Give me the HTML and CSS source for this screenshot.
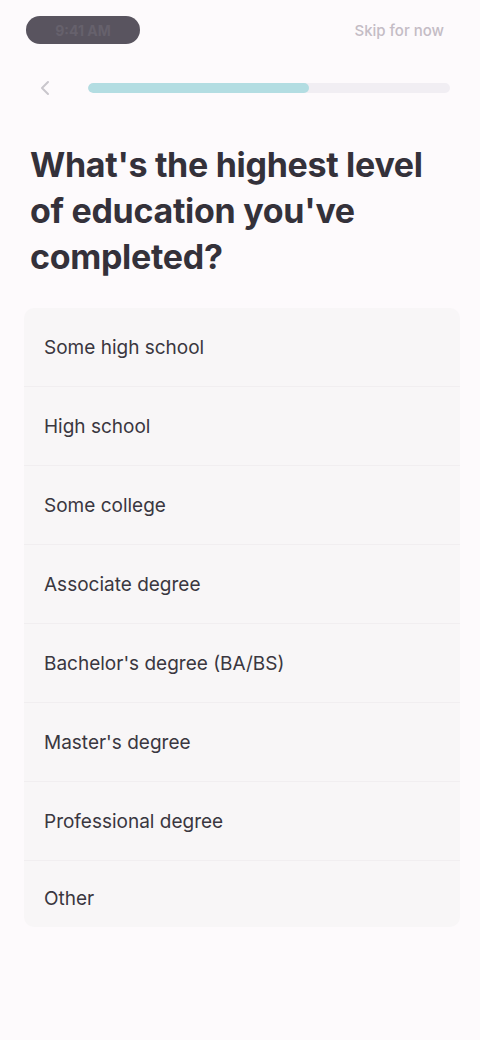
FILE: index.html
```html
<!DOCTYPE html>
<html lang="en">
<head>
<meta charset="utf-8">
<title>Education</title>
<link rel="stylesheet" href="styles.css">
</head>
<body>
<div class="screen">
  <header class="top">
    <div class="brand">9:41 AM</div>
    <div class="skip">Skip for now</div>
  </header>
  <div class="progress-row">
    <svg class="back" width="20" height="20" viewBox="0 0 20 20"><path d="M12 4 L6 10 L12 16" fill="none" stroke="#c9c6cc" stroke-width="2" stroke-linecap="round" stroke-linejoin="round"/></svg>
    <div class="track"><div class="fill" style="width:61%"></div></div>
  </div>
  <h1 class="question">What's the highest level of education you've completed?</h1>
  <ul class="options">
    <li class="option">Some high school</li>
    <li class="option">High school</li>
    <li class="option">Some college</li>
    <li class="option">Associate degree</li>
    <li class="option">Bachelor's degree (BA/BS)</li>
    <li class="option">Master's degree</li>
    <li class="option">Professional degree</li>
    <li class="option">Other</li>
  </ul>
</div>
</body>
</html>
```

FILE: styles.css
```css
* { box-sizing: border-box; }
html, body { margin: 0; padding: 0; }
body {
  background: #fdfafc;
  font-family: Inter, "Noto Sans", "Liberation Sans", sans-serif;
  color: #2f2c33;
}
.screen {
  width: 480px;
  min-height: 1040px;
  padding: 0 20px 0 24px;
}
.top {
  display: flex;
  justify-content: space-between;
  align-items: center;
  height: 60px;
  padding: 0 4px 0 2px;
}
.brand {
  background: #59545f;
  color: #66616c;
  border-radius: 14px;
  height: 28px;
  width: 114px;
  font-size: 14px;
  font-weight: 700;
  display: flex;
  align-items: center;
  justify-content: center;
}
.skip {
  color: #c4bcc5;
  font-size: 15px;
  font-weight: 500;
  margin-right: 12px;
}
.progress-row {
  display: flex;
  align-items: center;
  gap: 32px;
  height: 56px;
  padding: 0 10px 0 12px;
}
.back { flex: none; }
.track {
  flex: 1;
  height: 10px;
  border-radius: 5px;
  background: #f1eef3;
  overflow: hidden;
}
.fill {
  height: 100%;
  background: #b3dde2;
  border-radius: 5px;
}
.question {
  margin: 26px 0 0;
  padding: 0 6px;
  font-size: 34px;
  line-height: 46px;
  font-weight: 700;
  color: #34313a;
  letter-spacing: -0.3px;
}
.options {
  list-style: none;
  margin: 28px 0 0;
  padding: 0;
  background: #f8f6f7;
  border-radius: 10px;
}
.option {
  height: 79px;
  display: flex;
  align-items: center;
  padding: 0 20px;
  font-size: 19px;
  color: #3a3740;
  border-bottom: 1px solid #f1eef0;
}
.option:last-child {
  border-bottom: none;
  height: 66px;
  padding-top: 9px;
}
```
